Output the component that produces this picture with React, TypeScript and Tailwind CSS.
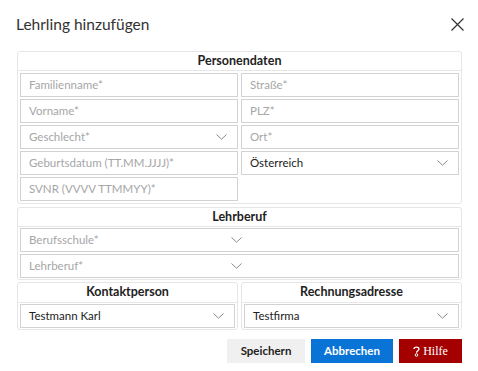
import { ReactNode } from "react";

const font = { fontFamily: "Lato, 'Open Sans', sans-serif" };

function Chevron() {
    return (
        <svg width="11" height="6" viewBox="0 0 11 6" className="shrink-0">
            <path d="M0.5 0.5 L5.5 5.2 L10.5 0.5" fill="none" stroke="#8a8a8a" strokeWidth="1" />
        </svg>
    );
}

function Field({ text, value }: { text: string; value?: boolean }) {
    return (
        <div className="flex h-[24px] items-center border border-[#d2d2d2] px-[8px]">
            <span className={`text-[11.5px] ${value ? "text-[#222]" : "text-[#a6a6a6]"}`}>{text}</span>
        </div>
    );
}

function Select({ text, value }: { text: string; value?: boolean }) {
    return (
        <div className="flex h-[24px] items-center justify-between border border-[#d2d2d2] pl-[8px] pr-[10px]">
            <span className={`text-[11.5px] ${value ? "text-[#222]" : "text-[#a6a6a6]"}`}>{text}</span>
            <Chevron />
        </div>
    );
}

// select that is only half as wide as its bordered box
function HalfSelect({ text }: { text: string }) {
    return (
        <div className="flex h-[24px] items-center border border-[#d2d2d2]">
            <div className="flex w-[223px] items-center justify-between pl-[8px] pr-[2px]">
                <span className="text-[11.5px] text-[#a6a6a6]">{text}</span>
                <Chevron />
            </div>
        </div>
    );
}

function Group({
    title,
    children,
    className = "",
    pad = "p-[1px]",
    head = "h-[19px]",
}: {
    title: string;
    children: ReactNode;
    className?: string;
    pad?: string;
    head?: string;
}) {
    return (
        <div className={`rounded-[3px] border border-[#e6e6e6] ${className}`}>
            <div className={`flex ${head} items-center justify-center border-b border-[#e6e6e6] text-[12.5px] font-bold text-[#222]`}>
                {title}
            </div>
            <div className={pad}>{children}</div>
        </div>
    );
}

export default function App() {
    return (
        <div className="h-[371px] w-[478px] bg-white" style={font}>
            <div className="flex h-[51px] items-start justify-between pl-[16px] pr-[14px] pt-[12px]">
                <h1 className="text-[15.5px] font-normal leading-[24px] text-[#333]">Lehrling hinzufügen</h1>
                <svg width="13" height="13" viewBox="0 0 13 13" className="mt-[6px]">
                    <path d="M0.5 0.5 L12.5 12.5 M12.5 0.5 L0.5 12.5" stroke="#333" strokeWidth="1.2" />
                </svg>
            </div>

            <div className="ml-[17px] w-[445px]">
                <Group title="Personendaten" pad="px-[2px] pt-[2px] pb-[2px]">
                    <div className="grid grid-cols-2 gap-x-[3px] gap-y-[2px]">
                        <Field text="Familienname*" />
                        <Field text="Straße*" />
                        <Field text="Vorname*" />
                        <Field text="PLZ*" />
                        <Select text="Geschlecht*" />
                        <Field text="Ort*" />
                        <Field text="Geburtsdatum (TT.MM.JJJJ)*" />
                        <Select text="Österreich" value />
                        <Field text="SVNR (VVVV TTMMYY)*" />
                    </div>
                </Group>

                <Group title="Lehrberuf" className="mt-[3px]" pad="px-[2px] py-[1px]">
                    <div className="flex flex-col gap-[2px]">
                        <HalfSelect text="Berufsschule*" />
                        <HalfSelect text="Lehrberuf*" />
                    </div>
                </Group>

                <div className="mt-[2px] grid grid-cols-2 gap-[3px]">
                    <Group title="Kontaktperson" head="h-[20px]" pad="px-[2px] py-[1px]">
                        <Select text="Testmann Karl" value />
                    </Group>
                    <Group title="Rechnungsadresse" head="h-[20px]" pad="px-[2px] py-[1px]">
                        <Select text="Testfirma" value />
                    </Group>
                </div>
            </div>

            <div className="mr-[16px] mt-[9px] flex justify-end gap-[6px]">
                <button className="h-[24px] w-[78px] bg-[#f0f0f0] text-[11.5px] font-bold text-[#222]">Speichern</button>
                <button className="h-[24px] w-[82px] bg-[#0a74d6] text-[11.5px] font-bold text-white">Abbrechen</button>
                <button
                    className="flex h-[24px] w-[63px] items-center justify-center gap-[3px] bg-[#a50000] text-[12px] text-white"
                    style={{ fontFamily: "'Liberation Serif', serif" }}
                >
                    <svg width="7" height="11" viewBox="0 0 7 11">
                        <path d="M1 3 C1 0.5 6 0.5 6 3 C6 4.6 3.5 4.8 3.5 6.8" fill="none" stroke="white" strokeWidth="1.3" />
                        <circle cx="3.5" cy="9" r="1.3" fill="none" stroke="white" strokeWidth="1" />
                    </svg>
                    Hilfe
                </button>
            </div>
        </div>
    );
}
